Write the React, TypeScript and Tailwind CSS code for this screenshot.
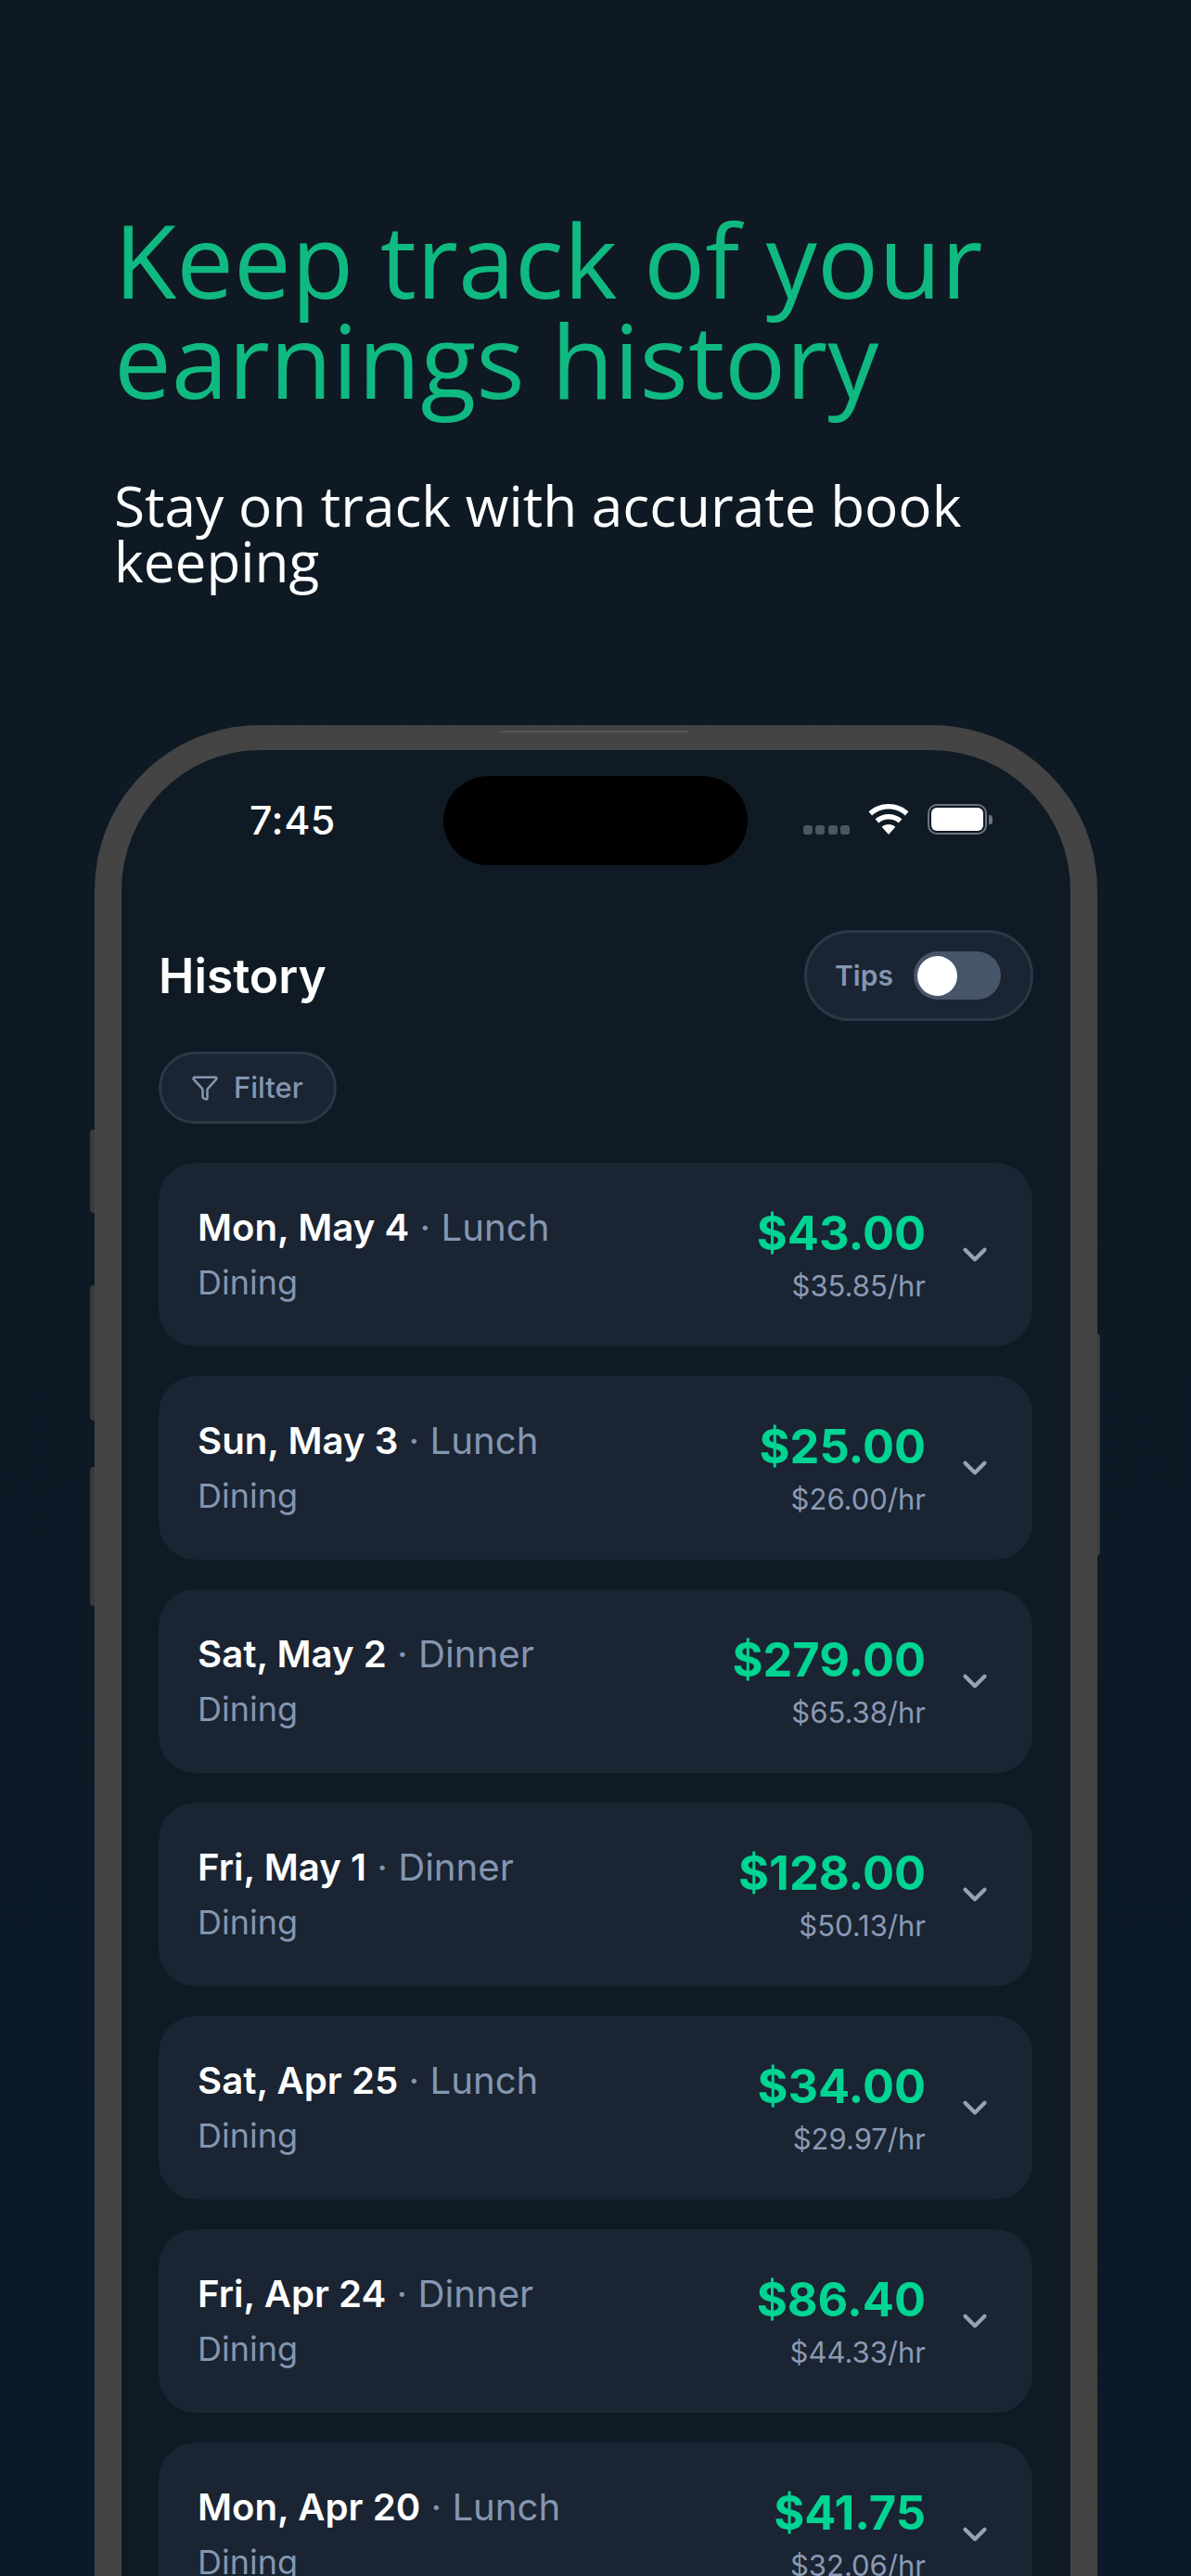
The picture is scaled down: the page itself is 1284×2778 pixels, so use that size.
import { ChevronDown, Funnel } from "lucide-react";

const rows = [
  ["Mon, May 4", "Lunch", "$43.00", "$35.85/hr"],
  ["Sun, May 3", "Lunch", "$25.00", "$26.00/hr"],
  ["Sat, May 2", "Dinner", "$279.00", "$65.38/hr"],
  ["Fri, May 1", "Dinner", "$128.00", "$50.13/hr"],
  ["Sat, Apr 25", "Lunch", "$34.00", "$29.97/hr"],
  ["Fri, Apr 24", "Dinner", "$86.40", "$44.33/hr"],
  ["Mon, Apr 20", "Lunch", "$41.75", "$32.06/hr"],
];

function Row({ d }: { d: string[] }) {
  return (
    <div className="flex h-[198px] shrink-0 items-center rounded-[40px] bg-[#1a2432] pl-[42px] pr-[41px]">
      <div className="flex-1">
        <div className="text-[40.2px] leading-[60px] text-[#8496b0]">
          <span className="font-semibold text-white">{d[0]}</span>
          <span> · {d[1]}</span>
        </div>
        <div className="text-[36px] leading-[58px] text-[#8496b0]">Dining</div>
      </div>
      <div className="text-right">
        <div className="text-[50.5px] font-bold leading-[66px] text-[#00d492]">{d[2]}</div>
        <div className="mt-[1px] text-[31px] leading-[46px] text-[#8b99b3]">{d[3]}</div>
      </div>
      <ChevronDown className="ml-[32px] size-[42px] text-[#94a3b8]" strokeWidth={2.4} />
    </div>
  );
}

export default function App() {
  return (
    <div className="flex h-[2778px] w-[1284px] flex-col overflow-hidden bg-gradient-to-b from-[#0f1923] to-[#0a1a28] font-['Inter',sans-serif]">
      <div className="px-[123px] pt-[225px] font-['Open_Sans',sans-serif]">
        <h1 className="text-[110px] font-normal leading-[108px] text-[#10b981]">
          Keep track of your
          <br />
          earnings history
        </h1>
        <p className="mt-[74px] text-[60.3px] leading-[60px] text-white">
          Stay on track with accurate book
          <br />
          keeping
        </p>
      </div>

      <div className="relative ml-[102px] mt-[147px] h-[2000px] w-[1081px] shrink-0">
        <div className="absolute left-[-5px] top-[436px] h-[90px] w-[6px] rounded-l-[4px] bg-[#3a3a3a]" />
        <div className="absolute left-[-5px] top-[604px] h-[146px] w-[6px] rounded-l-[4px] bg-[#3a3a3a]" />
        <div className="absolute left-[-5px] top-[800px] h-[150px] w-[6px] rounded-l-[4px] bg-[#3a3a3a]" />
        <div className="absolute right-[-3px] top-[656px] h-[240px] w-[4px] rounded-r-[4px] bg-[#3a3a3a]" />
        <div className="absolute left-[438px] top-[6px] z-10 h-[2px] w-[202px] bg-[#555555]" />
        <div className="relative h-full overflow-hidden rounded-t-[178px] border-x-[29px] border-t-[27px] border-[#444444] bg-[#0f1a24]">
          <div className="absolute left-[347px] top-[28px] h-[96px] w-[328px] rounded-[48px] bg-black" />

          <div className="flex h-[87px] items-end">
            <div className="relative top-[13px] ml-[138px] text-[43px] font-medium leading-[50px] tracking-[0.5px] text-white">7:45</div>
            <div className="relative top-[4px] ml-auto mr-[84px] flex items-center">
              <div className="mr-[20px] mt-[22px] flex gap-[3.5px]">
                <i className="size-[10px] rounded-[3px] bg-[#4b5563]" />
                <i className="size-[10px] rounded-[3px] bg-[#4b5563]" />
                <i className="size-[10px] rounded-[3px] bg-[#4b5563]" />
                <i className="size-[10px] rounded-[3px] bg-[#4b5563]" />
              </div>
              <svg width="44" height="33" viewBox="0 0 44 33" fill="white">
                <path d="M22 0c8.200 0 15.700 3.100 21.500 8.200l-3.600 4.200C35 8.200 28.800 5.600 22 5.600S9 8.200 4.100 12.400L.5 8.200C6.300 3.100 13.800 0 22 0z" />
                <path d="M22 11c5.500 0 10.500 2 14.400 5.300l-3.600 4.200C29.900 18 26.100 16.600 22 16.600s-7.900 1.400-10.800 3.900l-3.600-4.200C11.500 13 16.500 11 22 11z" />
                <path d="M22 22c2.800 0 5.300 1 7.300 2.700L22 33l-7.300-8.300C16.700 23 19.200 22 22 22z" />
              </svg>
              <div className="ml-[20px] flex items-center">
                <div className="flex h-[33px] w-[64px] rounded-[10px] border-[2.5px] border-[#6b7280] p-[2px]">
                  <div className="flex-1 rounded-[6px] bg-white" />
                </div>
                <div className="ml-[2px] h-[10px] w-[4px] rounded-r-[3px] bg-[#6b7280]" />
              </div>
            </div>
          </div>

          <div className="mt-[107px] flex items-center justify-between pl-[40px] pr-[40px]">
            <div className="text-[51.5px] font-semibold leading-[60px] text-white">History</div>
            <div className="flex h-[98px] w-[247px] items-center rounded-full border-[3px] border-[#2c3747] bg-[#1a2432] pl-[30px]">
              <span className="text-[30px] font-semibold text-[#8496b0]">Tips</span>
              <div className="ml-[22px] flex h-[52px] w-[94px] items-center rounded-full bg-[#475569] pl-[4px]">
                <div className="size-[43px] rounded-full bg-white" />
              </div>
            </div>
          </div>

          <div className="ml-[40px] mt-[33px] flex h-[78px] w-[192px] items-center rounded-full border-[3px] border-[#2c3747] bg-[#1a2432] pl-[32px]">
            <Funnel className="size-[30px] text-[#8496b0]" strokeWidth={2} />
            <span className="ml-[16px] text-[31px] font-medium text-[#8496b0]">Filter</span>
          </div>

          <div className="ml-[40px] mt-[42px] flex w-[942px] flex-col gap-[32px]">
            {rows.map((d) => (
              <Row key={d[0]} d={d} />
            ))}
          </div>
        </div>
      </div>
    </div>
  );
}
